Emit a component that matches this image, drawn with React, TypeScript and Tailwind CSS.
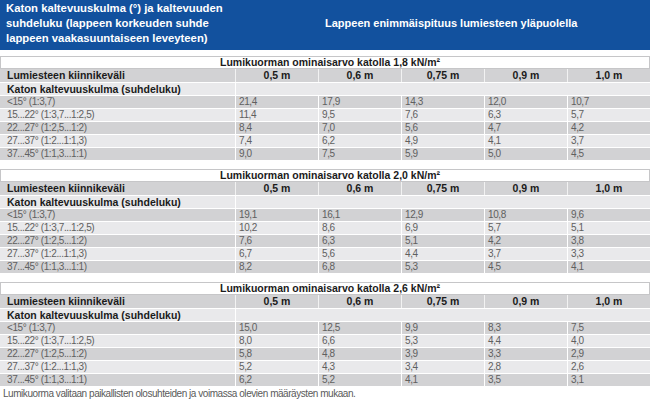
const labels = [
  "<15° (1:3,7)",
  "15...22° (1:3,7...1:2,5)",
  "22...27° (1:2,5...1:2)",
  "27...37° (1:2...1:1,3)",
  "37...45° (1:1,3...1:1)",
];

const spacings = ["0,5 m", "0,6 m", "0,75 m", "0,9 m", "1,0 m"];

const sections = [
  {
    load: "1,8",
    values: [
      ["21,4", "17,9", "14,3", "12,0", "10,7"],
      ["11,4", "9,5", "7,6", "6,3", "5,7"],
      ["8,4", "7,0", "5,6", "4,7", "4,2"],
      ["7,4", "6,2", "4,9", "4,1", "3,7"],
      ["9,0", "7,5", "5,9", "5,0", "4,5"],
    ],
  },
  {
    load: "2,0",
    values: [
      ["19,1", "16,1", "12,9", "10,8", "9,6"],
      ["10,2", "8,6", "6,9", "5,7", "5,1"],
      ["7,6", "6,3", "5,1", "4,2", "3,8"],
      ["6,7", "5,6", "4,4", "3,7", "3,3"],
      ["8,2", "6,8", "5,3", "4,5", "4,1"],
    ],
  },
  {
    load: "2,6",
    values: [
      ["15,0", "12,5", "9,9", "8,3", "7,5"],
      ["8,0", "6,6", "5,3", "4,4", "4,0"],
      ["5,8", "4,8", "3,9", "3,3", "2,9"],
      ["5,2", "4,3", "3,4", "2,8", "2,6"],
      ["6,2", "5,2", "4,1", "3,5", "3,1"],
    ],
  },
];

const sans = "font-['Liberation_Sans',Arial,sans-serif]";
const bold = `${sans} font-bold text-[10.5px] text-[#1b1b1b]`;
const thin = `${sans} text-[10px] tracking-[-0.4px] text-[#606060]`;

function Section({ load, values }: { load: string; values: string[][] }) {
  return (
    <div className="flex flex-col">
      {/* Title */}
      <div
        className={`h-[13px] border border-[#c6c6c8] bg-white pl-[10px] text-center leading-[11px] ${bold}`}
      >
        Lumikuorman ominaisarvo katolla {load} kN/m²
      </div>

      {/* Spacing row */}
      <div className="grid h-[13px] grid-cols-[235px_repeat(5,1fr)] bg-[#d2d2d4]">
        <div className={`pl-[7px] leading-[13px] ${bold}`}>Lumiesteen kiinnikeväli</div>
        {spacings.map((s) => (
          <div key={s} className={`border-l border-[#f2f2f2] text-center leading-[13px] ${bold}`}>
            {s}
          </div>
        ))}
      </div>

      {/* Slope heading */}
      <div className="grid h-[13px] grid-cols-[235px_1fr] border-t border-white bg-[#e9e9eb]">
        <div className={`pl-[7px] leading-[12px] ${bold}`}>Katon kaltevuuskulma (suhdeluku)</div>
        <div className="border-l border-white" />
      </div>

      {values.map((row, i) => (
        <div
          key={labels[i]}
          className={`grid h-[13px] grid-cols-[235px_repeat(5,1fr)] border-t border-white ${
            i % 2 === 0 ? "bg-[#d2d2d4]" : "bg-[#e9e9eb]"
          }`}
        >
          <div className={`pl-[7px] leading-[12px] ${thin}`}>{labels[i]}</div>
          {row.map((v, j) => (
            <div key={j} className={`border-l border-white pl-[3px] leading-[12px] ${thin}`}>
              {v}
            </div>
          ))}
        </div>
      ))}
    </div>
  );
}

export default function App() {
  return (
    <div className="h-[400px] w-[650px] overflow-hidden bg-white">
      {/* Blue header */}
      <div className={`flex h-[50px] bg-[#12519e] font-bold text-white ${sans}`}>
        <div className="w-[235px] pl-[6px] pt-[1px] text-[11.3px] leading-[15px]">
          Katon kaltevuuskulma (°) ja kaltevuuden suhdeluku (lappeen korkeuden suhde lappeen
          vaakasuuntaiseen leveyteen)
        </div>
        <div className="flex flex-1 items-center pb-[4px] pl-[90px] text-[11px]">
          Lappeen enimmäispituus lumiesteen yläpuolella
        </div>
      </div>

      <div className="mt-[6px] flex flex-col gap-[9px]">
        {sections.map((s) => (
          <Section key={s.load} load={s.load} values={s.values} />
        ))}
      </div>

      <p className={`mt-[1px] pl-[3px] text-[10px] leading-[13px] tracking-[-0.45px] text-[#5a5a5a] ${sans}`}>
        Lumikuorma valitaan paikallisten olosuhteiden ja voimassa olevien määräysten mukaan.
      </p>
    </div>
  );
}
